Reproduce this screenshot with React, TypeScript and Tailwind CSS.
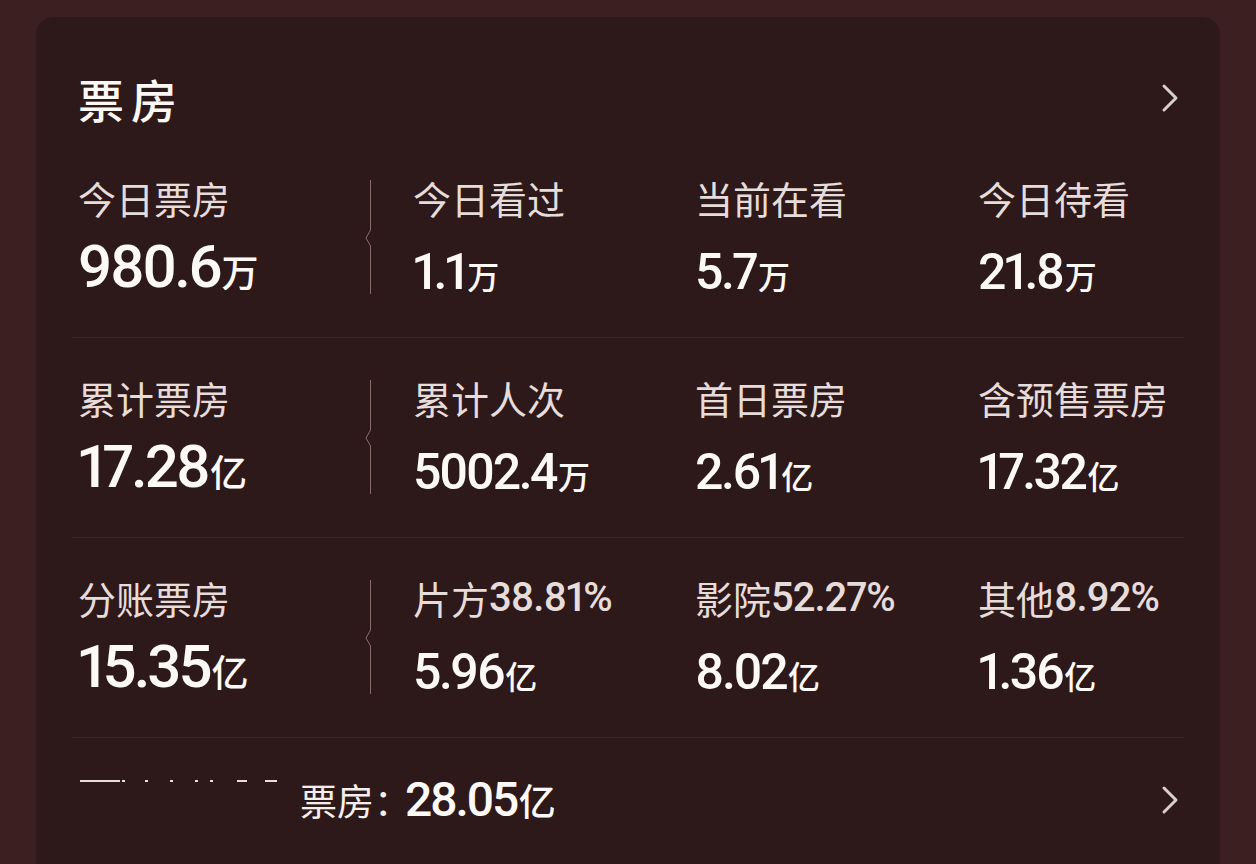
import React from "react";

const CJK = "font-['Noto_Sans_CJK_SC',sans-serif]";
const NUM = "font-['Roboto','Noto_Sans_CJK_SC',sans-serif] proportional-nums";

type Cell = { label: string; pct?: string; value: string; unit: string };

const rows: Cell[][] = [
  [
    { label: "今日票房", value: "980.6", unit: "万" },
    { label: "今日看过", value: "1.1", unit: "万" },
    { label: "当前在看", value: "5.7", unit: "万" },
    { label: "今日待看", value: "21.8", unit: "万" },
  ],
  [
    { label: "累计票房", value: "17.28", unit: "亿" },
    { label: "累计人次", value: "5002.4", unit: "万" },
    { label: "首日票房", value: "2.61", unit: "亿" },
    { label: "含预售票房", value: "17.32", unit: "亿" },
  ],
  [
    { label: "分账票房", value: "15.35", unit: "亿" },
    { label: "片方", pct: "38.81%", value: "5.96", unit: "亿" },
    { label: "影院", pct: "52.27%", value: "8.02", unit: "亿" },
    { label: "其他", pct: "8.92%", value: "1.36", unit: "亿" },
  ],
];

function Chevron() {
  return (
    <svg width="20" height="30" viewBox="0 0 20 30" fill="none">
      <path d="M4 3 L16 15 L4 27" stroke="#d9cfcd" strokeWidth="3" strokeLinecap="round" strokeLinejoin="round" />
    </svg>
  );
}

function Divider() {
  return (
    <svg width="10" height="114" viewBox="0 0 10 114" fill="none" className="shrink-0 mt-[2px]">
      <path d="M8.5 0 V50 L4 58 L8.5 66 V114" stroke="#8a6e6c" strokeWidth="1" />
    </svg>
  );
}

function Stat({ c, main }: { c: Cell; main?: boolean }) {
  return (
    <div className="flex flex-col">
      <div className={`h-[40px] flex items-center text-[38px] leading-none text-[#e6dcda] ${CJK}`}>
        <span>{c.label}</span>
        {c.pct && <span className={`${NUM} text-[40px] font-medium tracking-[-1px]`}>{c.pct}</span>}
      </div>
      <div className="mt-[27px] h-[52px] flex items-end text-[#fdf9f7]">
        <div className="flex items-baseline">
          {main ? (
            <>
              <span className={`${NUM} text-[60px] leading-none font-medium tracking-[-3px]`}>{c.value}</span>
              <span className={`${CJK} text-[37px] leading-none font-medium ml-[2px]`}>{c.unit}</span>
            </>
          ) : (
            <>
              <span className={`${NUM} text-[50px] leading-none font-medium tracking-[-2.5px]`}>{c.value}</span>
              <span className={`${CJK} text-[32px] leading-none font-medium ml-[2px]`}>{c.unit}</span>
            </>
          )}
        </div>
      </div>
    </div>
  );
}

export default function App() {
  return (
    <div className="w-[1256px] h-[864px] overflow-hidden bg-[#3c1f21] pt-[17px] pl-[36px]">
      <div className="w-[1184px] h-[900px] rounded-[18px] bg-[#2d191a] pl-[36px] pr-[36px]">
        <div className="flex items-center justify-between pl-[6px] pr-[4px] pt-[40px] h-[121px]">
          <span className={`${CJK} text-[46px] leading-none font-medium tracking-[7px] text-[#fbf7f5]`}>票房</span>
          <Chevron />
        </div>
        {rows.map((row, i) => (
          <div key={i} className="border-b border-[#3d2728] pt-[40px] pb-[40px] flex items-start pl-[6px]">
            <div className="w-[284px]">
              <Stat c={row[0]} main />
            </div>
            <Divider />
            <div className="w-[41px] shrink-0" />
            <div className="w-[282px]">
              <Stat c={row[1]} />
            </div>
            <div className="w-[283px]">
              <Stat c={row[2]} />
            </div>
            <div className="flex-1">
              <Stat c={row[3]} />
            </div>
          </div>
        ))}
        <div className="flex items-center justify-between pl-[8px] pr-[4px] h-[124px]">
          <div className="flex items-center">
            <div className="w-[220px] h-[40px] flex items-start">
              <div className="flex items-center">
                <div className="w-[40px] h-[2px] bg-[#e8dedc]" />
                <div className="w-[3px] h-[2px] bg-[#e8dedc] ml-[2px]" />
                <div className="w-[3px] h-[2px] bg-[#e8dedc] ml-[20px]" />
                <div className="w-[3px] h-[2px] bg-[#e8dedc] ml-[22px]" />
                <div className="w-[3px] h-[2px] bg-[#e8dedc] ml-[22px]" />
                <div className="w-[3px] h-[2px] bg-[#e8dedc] ml-[12px]" />
                <div className="w-[10px] h-[2px] bg-[#e8dedc] ml-[24px]" />
                <div className="w-[12px] h-[2px] bg-[#e8dedc] ml-[18px]" />
              </div>
            </div>
            <span className={`${CJK} text-[37px] leading-none text-[#f4eeec]`}>票房：</span>
            <span className={`${NUM} text-[48px] leading-none font-medium tracking-[-2.5px] text-[#fdf9f7] ml-[-6px]`}>28.05</span>
            <span className={`${CJK} text-[37px] leading-none font-medium text-[#fdf9f7] ml-[2px]`}>亿</span>
          </div>
          <Chevron />
        </div>
      </div>
    </div>
  );
}
